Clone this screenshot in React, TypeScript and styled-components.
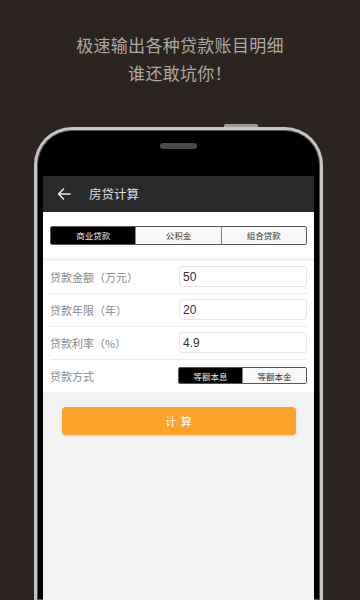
import styled, { createGlobalStyle } from 'styled-components';

const GlobalStyle = createGlobalStyle`
  html, body {
    margin: 0;
    padding: 0;
    background: #2b2421;
    overflow: hidden;
  }
  body {
    font-family: "Noto Sans CJK SC", "Noto Sans", sans-serif;
  }
`;

const Page = styled.div`
  width: 360px;
  height: 600px;
  overflow: hidden;
  background: #2b2421;
  display: flex;
  flex-direction: column;
  align-items: center;
`;

const Slogan = styled.div`
  margin-top: 31px;
  height: 97px;
  text-align: center;
  color: #aea7a2;
  font-size: 17px;
  line-height: 28px;
  letter-spacing: 0.3px;
`;

const Phone = styled.div`
  position: relative;
  width: 289px;
  height: 480px;
  margin-left: -3px;
  border: 3px solid #c4c4c4;
  border-bottom: none;
  border-radius: 38px 38px 0 0;
  background: #000;
  padding: 0 6px;
  box-sizing: border-box;
  box-shadow: inset 0 0 0 1px #555;
  display: flex;
  flex-direction: column;
`;

const TopButton = styled.div`
  position: absolute;
  top: -6px;
  left: 187px;
  width: 34px;
  height: 3px;
  border-radius: 2px 2px 0 0;
  background: #9a9a9a;
`;

const Bezel = styled.div`
  height: 46px;
  display: flex;
  justify-content: center;
  padding-top: 13px;
  box-sizing: border-box;
  flex-shrink: 0;
`;

const Speaker = styled.div`
  width: 37px;
  height: 6px;
  border-radius: 3px;
  background: #4a4a4a;
`;

const Screen = styled.div`
  flex: 1;
  background: #f2f2f2;
  display: flex;
  flex-direction: column;
`;

const Header = styled.div`
  height: 36px;
  background: #2a2a2a;
  display: flex;
  align-items: center;
  padding-left: 14px;
  gap: 18px;
  color: #dedede;
  font-size: 12.5px;
`;

const TabSection = styled.div`
  background: #fff;
  padding: 14px 7px 13px;
  margin-bottom: 3px;
`;

const Segmented = styled.div<{ $width?: number }>`
  display: flex;
  width: ${(p) => (p.$width ? `${p.$width}px` : '100%')};
  border: 1px solid #555;
  border-radius: 2px;
  overflow: hidden;
  box-sizing: border-box;
`;

const Segment = styled.div<{ $active?: boolean; $h: number }>`
  flex: 1;
  height: ${(p) => p.$h}px;
  display: flex;
  align-items: center;
  justify-content: center;
  font-size: 8.5px;
  background: ${(p) => (p.$active ? '#000' : '#f8f8f8')};
  color: ${(p) => (p.$active ? '#e8e8e8' : '#333')};
  & + & {
    border-left: 1px solid #888;
  }
`;

const Form = styled.div`
  background: #fff;
  padding: 0 7px;
`;

const Row = styled.div<{ $last?: boolean }>`
  height: 32px;
  display: flex;
  align-items: center;
  justify-content: space-between;
  border-bottom: ${(p) => (p.$last ? 'none' : '1px solid #ececec')};
`;

const Label = styled.span`
  color: #8a8a8a;
  font-size: 11px;
`;

const Input = styled.div`
  width: 128px;
  height: 21px;
  border: 1px solid #e6e6e6;
  border-radius: 3px;
  box-sizing: border-box;
  display: flex;
  align-items: center;
  padding-left: 3px;
  color: #333;
  font-size: 12px;
  font-family: "Liberation Sans", Arial, sans-serif;
`;

const ButtonArea = styled.div`
  padding: 15px 18px 0 19px;
`;

const CalcButton = styled.div`
  height: 28px;
  border-radius: 4px;
  background: #fca229;
  box-shadow: 0 1px 2px rgba(0, 0, 0, 0.15);
  display: flex;
  align-items: center;
  justify-content: center;
  color: #fff;
  font-size: 11px;
  letter-spacing: 1px;
`;

const BackArrow = () => (
  <svg width="14" height="12" viewBox="0 0 14 12" fill="none">
    <path
      d="M13 6H1.5M6.5 1L1.5 6l5 5"
      stroke="#e6e6e6"
      strokeWidth="1.6"
      strokeLinecap="round"
      strokeLinejoin="round"
    />
  </svg>
);

const fields = [
  { label: '贷款金额（万元）', value: '50' },
  { label: '贷款年限（年）', value: '20' },
  { label: '贷款利率（%）', value: '4.9' },
];

export default function App() {
  return (
    <Page>
      <GlobalStyle />
      <Slogan>
        极速输出各种贷款账目明细
        <br />
        谁还敢坑你！
      </Slogan>
      <Phone>
        <TopButton />
        <Bezel>
          <Speaker />
        </Bezel>
        <Screen>
          <Header>
            <BackArrow />
            <span>房贷计算</span>
          </Header>
          <TabSection>
            <Segmented>
              <Segment $active $h={17}>商业贷款</Segment>
              <Segment $h={17}>公积金</Segment>
              <Segment $h={17}>组合贷款</Segment>
            </Segmented>
          </TabSection>
          <Form>
            {fields.map((f) => (
              <Row key={f.label}>
                <Label>{f.label}</Label>
                <Input>{f.value}</Input>
              </Row>
            ))}
            <Row $last>
              <Label>贷款方式</Label>
              <Segmented $width={129}>
                <Segment $active $h={15}>等额本息</Segment>
                <Segment $h={15}>等额本金</Segment>
              </Segmented>
            </Row>
          </Form>
          <ButtonArea>
            <CalcButton>计 算</CalcButton>
          </ButtonArea>
        </Screen>
      </Phone>
    </Page>
  );
}
